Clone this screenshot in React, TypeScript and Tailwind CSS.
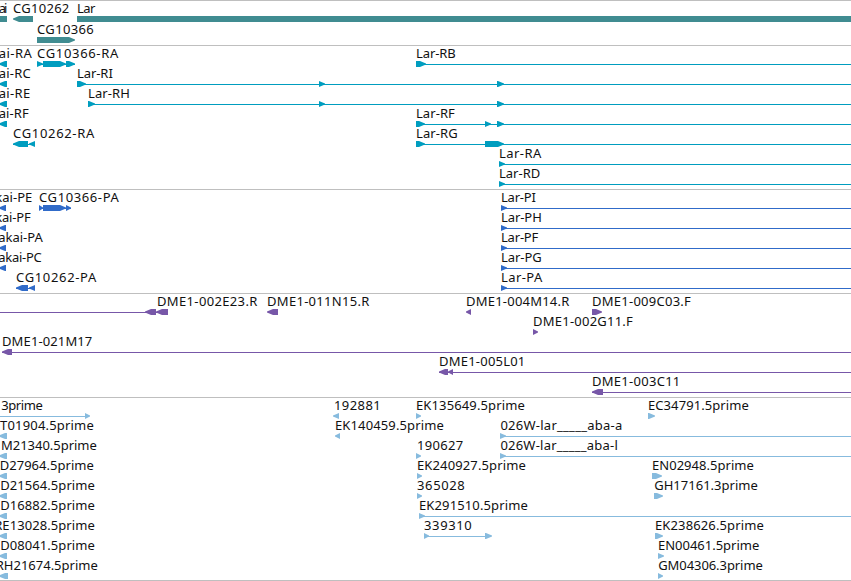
type Label = [text: string, start: number, end: number];
type Span = [start: number, end: number];

interface Row {
  labels: Label[];
  lines?: Span[];
  fwd?: Span[];
  rev?: Span[];
  bars?: Span[];
}

interface Track {
  name: string;
  color: string;
  rowClass: string;
  padClass: string;
  rows: Row[];
}

const END = 851;

const TRACKS: Track[] = [
  {
    name: "genes",
    color: "text-[#408c91]",
    rowClass: "h-[21px]",
    padClass: "pb-0.5",
    rows: [
      {
        labels: [["ai", -1, 7], ["CG10262", 13.3, 69], ["Lar", 77.3, 95]],
        bars: [[0, 7], [77, END]],
        rev: [[13, 33]],
      },
      { labels: [["CG10366", 37.3, 93.5]], fwd: [[37, 75]] },
    ],
  },
  {
    name: "transcripts",
    color: "text-[#009dbf]",
    rowClass: "h-5",
    padClass: "pb-[3px]",
    rows: [
      {
        labels: [["ai-RA", -1, 31.5], ["CG10366-RA", 37.3, 118], ["Lar-RB", 416.3, 455.5]],
        lines: [[37, 75], [416, END]],
        rev: [[-1, 7]],
        fwd: [[37, 43], [43, 66], [66, 75], [416, 426]],
      },
      {
        labels: [["ai-RC", -1, 30.5], ["Lar-RI", 77.3, 112.5]],
        lines: [[77, END]],
        rev: [[-1, 7]],
        fwd: [[77, 86], [319, 325], [497, 504]],
      },
      {
        labels: [["ai-RE", -1, 30], ["Lar-RH", 88.3, 129.5]],
        lines: [[88, END]],
        rev: [[-1, 7]],
        fwd: [[88, 95], [319, 325], [497, 504]],
      },
      {
        labels: [["ai-RF", -1, 28.5], ["Lar-RF", 416.3, 454.5]],
        lines: [[416, END]],
        rev: [[-1, 7]],
        fwd: [[416, 425], [485, 491], [497, 504]],
      },
      {
        labels: [["CG10262-RA", 13.3, 94], ["Lar-RG", 416.3, 457.5]],
        lines: [[13, 35], [416, END]],
        rev: [[13, 28], [29, 35]],
        fwd: [[416, 425], [485, 504]],
      },
      { labels: [["Lar-RA", 499.3, 541]], lines: [[499, END]], fwd: [[499, 505]] },
      { labels: [["Lar-RD", 499.3, 540]], lines: [[499, END]], fwd: [[499, 505]] },
    ],
  },
  {
    name: "proteins",
    color: "text-[#306bc9]",
    rowClass: "h-5",
    padClass: "pb-[3px]",
    rows: [
      {
        labels: [["kai-PE", -4.5, 32], ["CG10366-PA", 39.3, 118.5], ["Lar-PI", 501.3, 535.5]],
        lines: [[39, 71], [501, END]],
        rev: [[-1, 6]],
        fwd: [[39, 43], [43, 66], [66, 71], [501, 507]],
      },
      {
        labels: [["kai-PF", -4.5, 30.5], ["Lar-PH", 501.3, 541.5]],
        lines: [[501, END]],
        rev: [[-1, 6]],
        fwd: [[501, 507]],
      },
      {
        labels: [["akai-PA", -1.5, 42.5], ["Lar-PF", 501.3, 538]],
        lines: [[501, END]],
        rev: [[-1, 6]],
        fwd: [[501, 507]],
      },
      {
        labels: [["akai-PC", -1.5, 41.5], ["Lar-PG", 501.3, 541.5]],
        lines: [[501, END]],
        rev: [[-1, 6]],
        fwd: [[501, 507]],
      },
      {
        labels: [["CG10262-PA", 16.3, 96], ["Lar-PA", 501.3, 542]],
        lines: [[16, 35], [501, END]],
        rev: [[16, 28], [29, 35]],
        fwd: [[501, 507]],
      },
    ],
  },
  {
    name: "bac-ends",
    color: "text-[#7757a8]",
    rowClass: "h-5",
    padClass: "pb-[3px]",
    rows: [
      {
        labels: [
          ["DME1-002E23.R", 157.3, 257],
          ["DME1-011N15.R", 267.3, 369],
          ["DME1-004M14.R", 466.3, 569],
          ["DME1-009C03.F", 592.3, 690.5],
        ],
        lines: [[0, 168]],
        rev: [[145, 156], [156, 168], [267, 278], [466, 471]],
        fwd: [[592, 602]],
      },
      { labels: [["DME1-002G11.F", 533.3, 632.5]], fwd: [[533, 538]] },
      { labels: [["DME1-021M17", 2.3, 92]], lines: [[2, END]], rev: [[2, 12]] },
      { labels: [["DME1-005L01", 439.3, 525]], lines: [[439, END]], rev: [[439, 448], [448, 453]] },
      { labels: [["DME1-003C11", 592.3, 680]], lines: [[592, END]], rev: [[592, 603]] },
    ],
  },
  {
    name: "insertions",
    color: "text-[#87bbde]",
    rowClass: "h-5",
    padClass: "pb-0.5",
    rows: [
      {
        labels: [
          ["3prime", 1.5, 42.5],
          ["192881", 334.3, 380.5],
          ["EK135649.5prime", 416.3, 524.5],
          ["EC34791.5prime", 648.3, 748.5],
        ],
        lines: [[0, 87]],
        rev: [[333, 339]],
        fwd: [[85, 90], [416, 421], [648, 655]],
      },
      {
        labels: [["T01904.5prime", 0.3, 93.5], ["EK140459.5prime", 335.3, 443.5], ["026W-lar_____aba-a", 500.7, 622]],
        lines: [[500, END]],
        rev: [[-1, 7], [335, 340]],
        fwd: [[500, 506]],
      },
      {
        labels: [["M21340.5prime", 1.3, 96.5], ["190627", 417.3, 463], ["026W-lar_____aba-l", 500.7, 617.5]],
        lines: [[500, END]],
        rev: [[-1, 7]],
        fwd: [[416, 421], [500, 506]],
      },
      {
        labels: [["D27964.5prime", 0, 93.5], ["EK240927.5prime", 417.3, 525.5], ["EN02948.5prime", 652.3, 753.5]],
        rev: [[-1, 7]],
        fwd: [[417, 422], [652, 662]],
      },
      {
        labels: [["D21564.5prime", 0.5, 94.5], ["365028", 417.3, 464.5], ["GH17161.3prime", 654.5, 757.5]],
        rev: [[-1, 7]],
        fwd: [[417, 422], [654, 663]],
      },
      {
        labels: [["D16882.5prime", 0.5, 94.5], ["EK291510.5prime", 419.3, 527.5]],
        lines: [[419, END]],
        rev: [[-1, 7]],
        fwd: [[419, 425]],
      },
      {
        labels: [["RE13028.5prime", -5.5, 94.5], ["339310", 424.3, 471.5], ["EK238626.5prime", 655.3, 763.5]],
        lines: [[424, 490]],
        rev: [[-1, 7]],
        fwd: [[424, 429], [485, 492], [655, 663]],
      },
      {
        labels: [["D08041.5prime", 0.5, 94.5], ["EN00461.5prime", 658.3, 759]],
        rev: [[-1, 7]],
        fwd: [[658, 664]],
      },
      {
        labels: [["RH21674.5prime", -4, 97.5], ["GM04306.3prime", 658.5, 762.5]],
        rev: [[-1, 8]],
        fwd: [[658, 663]],
      },
    ],
  },
];

// block with a pointed end; short spans collapse to a triangle
function arrow([start, end]: Span, reverse: boolean) {
  const head = Math.min(6, end - start);
  return reverse
    ? `${end},15 ${start + head},15 ${start},17.5 ${start},18.5 ${start + head},21 ${end},21`
    : `${start},15 ${end - head},15 ${end},17.5 ${end},18.5 ${end - head},21 ${start},21`;
}

function FeatureRow({ row }: { row: Row }) {
  return (
    <svg width={END} height={21} className="block overflow-visible" fill="currentColor">
      {row.lines?.map(([a, b]) => (
        <rect key={a} x={a} y={18} width={b - a} height={1} />
      ))}
      {row.bars?.map(([a, b]) => (
        <rect key={a} x={a} y={15} width={b - a} height={6} />
      ))}
      {row.fwd?.map((span) => (
        <polygon key={span[0]} points={arrow(span, false)} />
      ))}
      {row.rev?.map((span) => (
        <polygon key={span[0]} points={arrow(span, true)} />
      ))}
      {row.labels.map(([text, a, b]) => (
        <text key={text} x={a - 0.3} y={12} textLength={b - a + 0.6} className="fill-[#111111]">
          {text}
        </text>
      ))}
    </svg>
  );
}

export default function App() {
  return (
    <main className="flex h-[581px] w-[851px] flex-col overflow-hidden border-b border-[#bfbfbf] bg-white font-['Noto_Sans',sans-serif] text-[13px]">
      {TRACKS.map((track) => (
        <section key={track.name} className={`border-t border-[#bfbfbf] ${track.color} ${track.padClass}`}>
          {track.rows.map((row, idx) => (
            <div key={idx} className={track.rowClass}>
              <FeatureRow row={row} />
            </div>
          ))}
        </section>
      ))}
    </main>
  );
}
